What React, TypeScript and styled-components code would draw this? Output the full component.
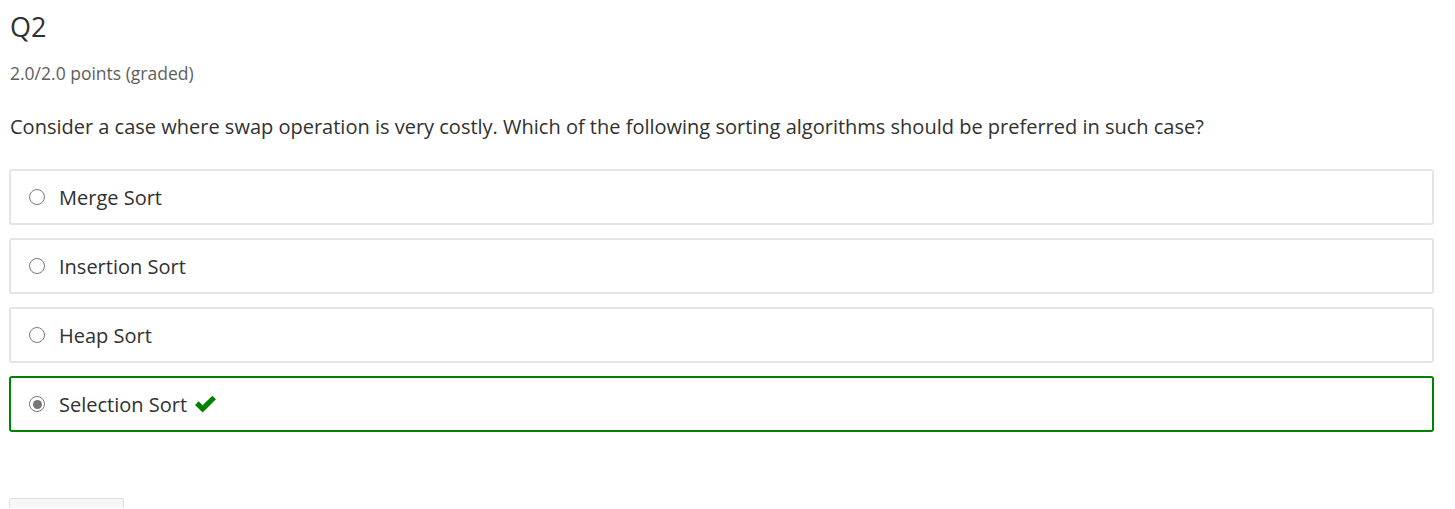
import styled, { createGlobalStyle } from "styled-components";

const GlobalStyle = createGlobalStyle`
  body {
    margin: 0;
    background: #fff;
    font-family: "Open Sans", "Liberation Sans", sans-serif;
    overflow: hidden;
  }
`;

interface Choice {
  label: string;
  selected?: boolean;
}

const choices: Choice[] = [
  { label: "Merge Sort" },
  { label: "Insertion Sort" },
  { label: "Heap Sort" },
  { label: "Selection Sort", selected: true },
];

export default function App() {
  return (
    <>
      <GlobalStyle />
      <Problem>
        <Title>Q2</Title>
        <Points>2.0/2.0 points (graded)</Points>
        <Question>
          Consider a case where swap operation is very costly. Which of the
          following sorting algorithms should be preferred in such case?
        </Question>
        <ChoiceList>
          {choices.map((c) => (
            <ChoiceRow key={c.label} $correct={!!c.selected}>
              <Radio $checked={!!c.selected} />
              <ChoiceLabel>{c.label}</ChoiceLabel>
              {c.selected && (
                <CheckIcon viewBox="0 0 24 20">
                  <path
                    d="M1 10.5 L4.8 6.7 L9 10.9 L19.2 0.7 L23 4.5 L9 18.5 Z"
                    fill="#008100"
                  />
                </CheckIcon>
              )}
            </ChoiceRow>
          ))}
        </ChoiceList>
        <SubmitButton />
      </Problem>
    </>
  );
}

const Problem = styled.div`
  width: 1425px;
  padding: 9px 0 0 9px;
  display: flex;
  flex-direction: column;
`;

const Title = styled.h2`
  margin: 0 0 0 1px;
  font-size: 27px;
  font-weight: 400;
  line-height: 36px;
  color: #313131;
`;

const Points = styled.div`
  margin: 16px 0 0 1px;
  font-size: 17.5px;
  line-height: 24px;
  color: #5e5e5e;
`;

const Question = styled.p`
  margin: 28px 0 0 1px;
  font-size: 20px;
  line-height: 28px;
  color: #313131;
`;

const ChoiceList = styled.div`
  margin-top: 28px;
  display: flex;
  flex-direction: column;
  gap: 13px;
`;

const ChoiceRow = styled.label<{ $correct: boolean }>`
  height: 56px;
  box-sizing: border-box;
  border: 2px solid ${({ $correct }) => ($correct ? "#008100" : "#e4e4e4")};
  border-radius: 3px;
  display: flex;
  align-items: center;
  padding-left: 18px;
`;

const Radio = styled.span<{ $checked: boolean }>`
  width: 16px;
  height: 16px;
  box-sizing: border-box;
  border-radius: 50%;
  border: 1.5px solid #7a7a7a;
  display: flex;
  align-items: center;
  justify-content: center;
  background: #fff;

  &::after {
    content: "";
    width: 9px;
    height: 9px;
    border-radius: 50%;
    background: ${({ $checked }) => ($checked ? "#767676" : "transparent")};
  }
`;

const ChoiceLabel = styled.span`
  margin-left: 14px;
  font-size: 20px;
  color: #313131;
`;

const CheckIcon = styled.svg`
  width: 23px;
  height: 19px;
  margin-left: 7px;
`;

const SubmitButton = styled.div`
  margin-top: 66px;
  width: 115px;
  height: 10px;
  box-sizing: border-box;
  border: 1px solid #e0e0e0;
  border-bottom: none;
  border-radius: 3px 3px 0 0;
  background: #f7f7f7;
`;
